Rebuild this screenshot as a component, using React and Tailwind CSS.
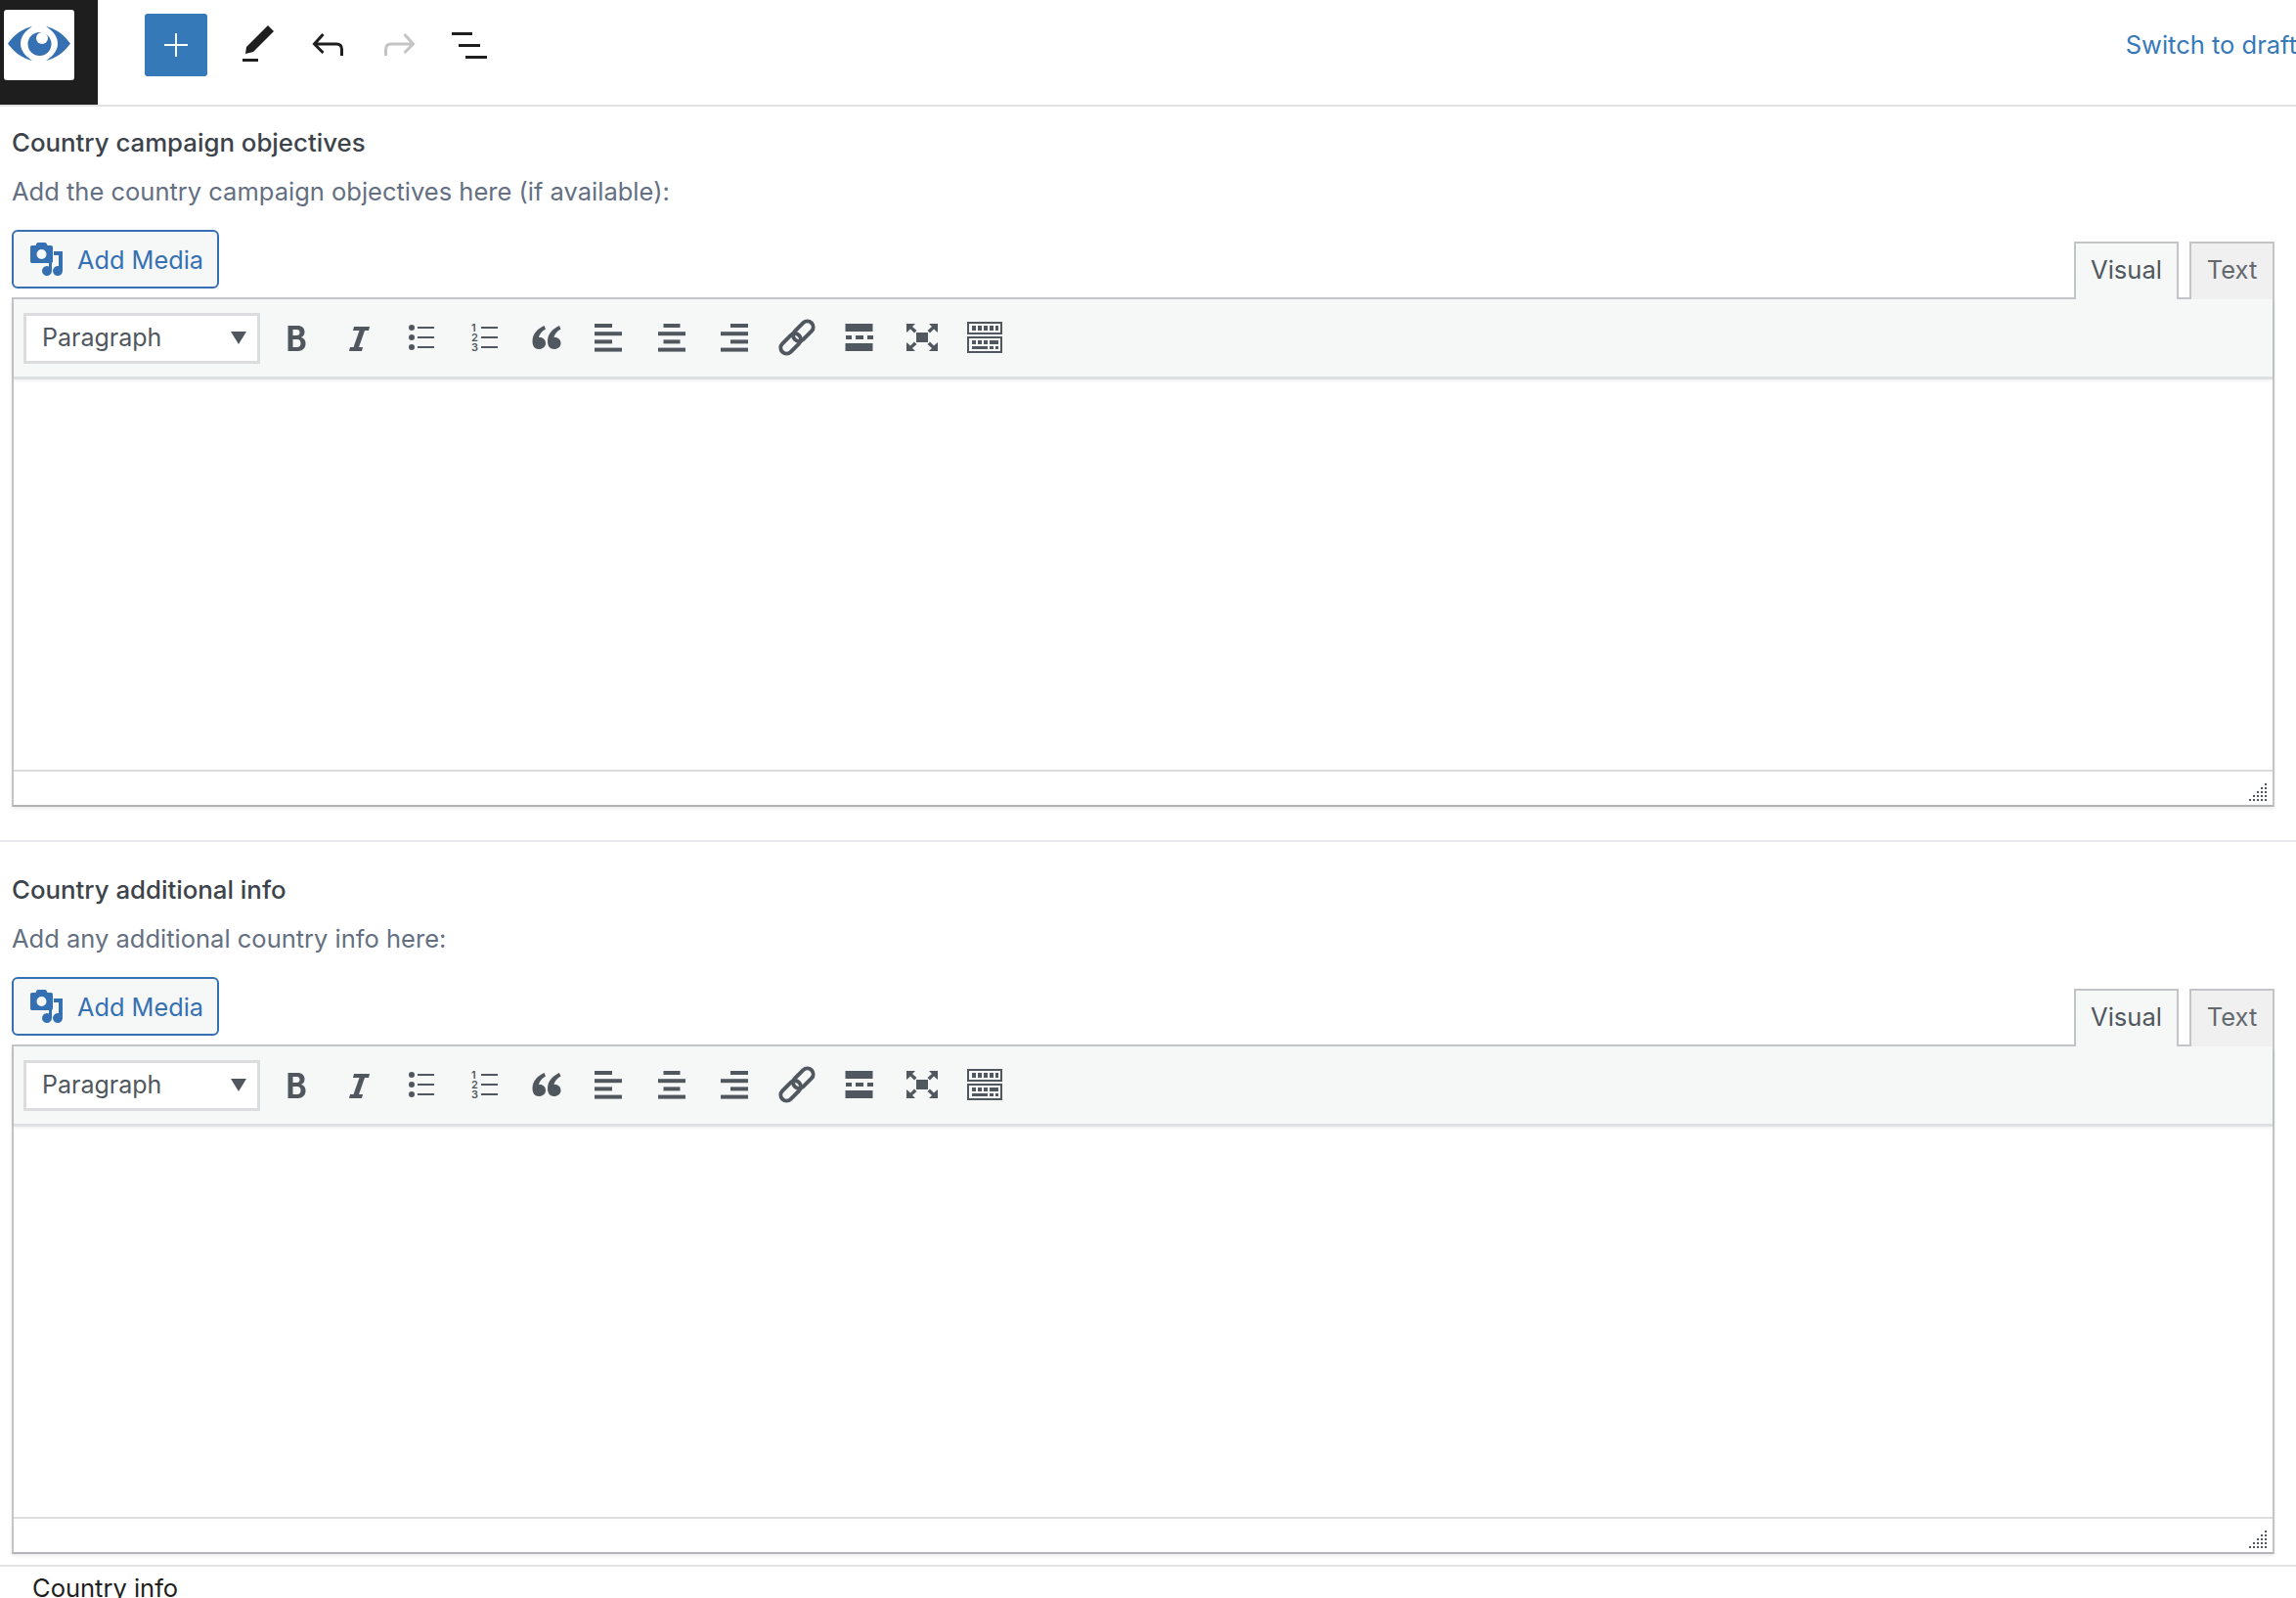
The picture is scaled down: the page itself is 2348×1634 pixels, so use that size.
import React from 'react';

const Fill = ({ className = 'w-9 h-9', children, viewBox = '0 0 36 36', fill = '#50575e' }) => (
    <svg className={className} viewBox={viewBox} fill={fill}>{children}</svg>
);

function BoldIcon() {
    return <Fill><path fillRule="evenodd" d="M9.500 6h9.500c5 0 7.500 2.500 7.500 6.500 0 2.700-1.300 4.600-3.500 5.400 3 .7 4.500 3 4.500 6.400 0 4.700-3 7.700-8 7.700H9.500zM14.500 10v6h4c2 0 3-1 3-3s-1-3-3-3zM14.500 20v8h4.500c2.200 0 3.500-1.400 3.500-4s-1.300-4-3.500-4z" /></Fill>;
}

function ItalicIcon() {
    return <Fill><path d="M13 7h16l-1 4h-4l-6 17h4l-1 4H8l1-4h3.500l6-17H12z" /></Fill>;
}

function BulletIcon() {
    return <Fill>
        <circle cx="8" cy="8" r="3" /><circle cx="8" cy="18" r="3" /><circle cx="8" cy="28" r="3" />
        <rect x="14" y="7" width="17" height="2" /><rect x="14" y="17" width="17" height="2" /><rect x="14" y="27" width="17" height="2" />
    </Fill>;
}

function NumberIcon() {
    return <div className="relative w-9 h-9">
        <Fill className="w-9 h-9 absolute inset-0">
            <rect x="15" y="7" width="17" height="2" /><rect x="15" y="17" width="17" height="2" /><rect x="15" y="27" width="17" height="2" />
        </Fill>
        <span className="absolute left-[5px] top-[3px] text-[11px] leading-[10px] font-semibold text-[#50575e]">1<br />2<br />3</span>
    </div>;
}

function QuoteIcon() {
    const glyph = 'M15.500 6C9 9 3.500 14 3.500 22c0 5 2.500 8 6.500 8 4 0 7-2.500 7-6 0-3.500-2.500-6-6-6-.5 0-.8 0-1 .1.500-3.100 3-6.600 7-8.600z';
    return <Fill>
        <path d={glyph} />
        <path d={glyph} transform="translate(15.500 0)" />
    </Fill>;
}

function AlignIcon({ side }) {
    const rows = {
        left: [[3, 18], [3, 28], [3, 18], [3, 28]],
        center: [[9.500, 17], [4, 28], [9.500, 17], [4, 28]],
        right: [[14, 18], [4, 28], [14, 18], [4, 28]],
    }[side];
    return <Fill>
        {rows.map(([x, w], i) => <rect key={i} x={x} y={4 + i * 8.200} width={w} height="4" />)}
    </Fill>;
}

function LinkIcon() {
    return <svg className="w-9 h-9 overflow-visible" viewBox="0 0 36 36" fill="none" stroke="#50575e" strokeWidth="4">
        <g transform="rotate(-45 18 18)">
            <rect x="-3" y="12" width="24" height="12" rx="6" />
            <rect x="15" y="12" width="24" height="12" rx="6" />
        </g>
    </svg>;
}

function MoreIcon() {
    return <Fill>
        <rect x="3.500" y="4" width="28" height="8" />
        <rect x="4" y="16" width="6" height="4" /><rect x="14" y="16" width="8" height="4" /><rect x="26" y="16" width="6" height="4" />
        <rect x="3.500" y="24" width="28" height="8" />
    </Fill>;
}

function FullscreenIcon() {
    return <Fill>
        <rect x="12" y="13" width="12" height="10" />
        <path d="M2 4h9L8 7l4.500 4-2.500 2.500L6 9.500 2 13zM34 4h-9l3 3-4.500 4 2.500 2.500 4-4 4 3.500zM2 32h9l-3-3 4.500-4-2.500-2.500-4 4L2 23zM34 32h-9l3-3-4.500-4 2.500-2.500 4 4 4-3.500z" />
    </Fill>;
}

function KitchenIcon() {
    return <Fill>
        <path fillRule="evenodd" d="M0 2h36v13H0zM2 4v9h32V4zM0 17h36v17H0zM2 19v13h32V19z" />
        <rect x="5" y="6" width="4" height="5" /><rect x="11" y="6" width="4" height="5" /><rect x="17" y="6" width="4" height="5" /><rect x="23" y="6" width="4" height="5" /><rect x="29" y="6" width="3" height="5" />
        <rect x="5" y="21" width="4" height="4" /><rect x="11" y="21" width="4" height="4" /><rect x="17" y="21" width="4" height="4" /><rect x="23" y="21" width="9" height="4" />
        <rect x="5" y="27" width="16" height="3" /><rect x="23" y="27" width="4" height="3" /><rect x="29" y="27" width="3" height="3" />
    </Fill>;
}

function MediaIcon() {
    return <svg className="w-[34px] h-[35px]" viewBox="0 0 34 35" fill="#3571b2">
        <path fillRule="evenodd" d="M8 0h7c1 0 2 1 2.500 3H21c1.500 0 2 .8 2 2v14c0 1.500-.8 2-2 2H2c-1.200 0-2-.5-2-2V5c0-1.200.5-2 2-2h3.500C6 1 7 0 8 0zM11.500 7a5 5 0 1 0 0 10 5 5 0 0 0 0-10z" />
        <path d="M24 9h9v20a5 5 0 1 1-4-4.900V13h-5z" />
        <path d="M19 21h3v8a5 5 0 1 1-3-4.600z" />
    </svg>;
}

function EditorBlock({ title, hint, first }) {
    return (
        <div className={first ? 'h-[752px] pt-[21px] pl-3 pr-[22px] border-b-2 border-[#e8e8ec]' : 'h-[741px] pt-[33px] pl-3 pr-[22px] border-b-2 border-[#e2e2e4]'}>
            <h2 className="text-[25.8px] leading-[32px] font-medium text-[#3c434a]">{title}</h2>
            <p className="mt-[18px] text-[25.5px] leading-[32px] text-[#646f82]">{hint}</p>
            <div className="mt-[23px] h-[69px] flex justify-between items-start relative">
                <button className="w-[212px] h-[60px] flex items-center gap-[14px] pl-[17px] border-2 border-[#3571b2] rounded-[6px] bg-[#f6f7f7] text-[25.3px] text-[#3571b2]">
                    <MediaIcon />
                    <span className="pt-[2px]">Add Media</span>
                </button>
                <div className="flex gap-[11px] absolute right-0 top-[12px]">
                    <div className="w-[107px] h-[59px] pb-[3px] border-2 border-b-0 border-[#c3c4c7] bg-[#f6f7f7] flex items-center justify-center text-[25.5px] text-[#50575e] z-10">Visual</div>
                    <div className="w-[87px] h-[59px] pb-[3px] border-2 border-b-0 border-[#c3c4c7] bg-[#f0f0f1] flex items-center justify-center text-[25.5px] text-[#646970] z-10">Text</div>
                </div>
            </div>
            <div className="h-[521px] border-2 border-[#c3c4c7] border-b-[#b2b3b7] shadow-[0_2px_3px_rgba(0,0,0,0.08)] flex flex-col">
                <div className="h-[79px] shrink-0 bg-[#f6f7f7] shadow-[0_3px_0_#dfe0e1,0_4px_4px_rgba(0,0,0,0.08)] flex items-center pl-[10px] z-0">
                    <div className="w-[242px] h-[52px] border-[3px] border-[#dcdcde] bg-white flex items-center justify-between pl-[16px] pr-[11px] text-[25px] text-[#50575e]">
                        <span>Paragraph</span>
                        <span className="w-0 h-0 border-x-[8px] border-x-transparent border-t-[13px] border-t-[#50575e]" />
                    </div>
                    <div className="flex ml-[5px] -mt-[1px]">
                        {[<BoldIcon />, <ItalicIcon />, <BulletIcon />, <NumberIcon />, <QuoteIcon />, <AlignIcon side="left" />, <AlignIcon side="center" />, <AlignIcon side="right" />, <LinkIcon />, <MoreIcon />, <FullscreenIcon />, <KitchenIcon />].map((icon, i) => (
                            <div key={i} className="w-[64px] h-[52px] flex items-center justify-center">{icon}</div>
                        ))}
                    </div>
                </div>
                <div className="flex-1 bg-white" />
                <div className="h-[36px] shrink-0 border-t-2 border-[#dcdcde] bg-white flex justify-end items-end pr-[6px] pb-[4px]">
                    <svg className="w-[18px] h-[18px]" viewBox="0 0 18 18" fill="#50575e">
                        {[0, 1, 2, 3, 4].flatMap((r) => [0, 1, 2, 3, 4].filter((c) => c >= 4 - r).map((c) => <rect key={`${r}-${c}`} x={c * 4} y={r * 4} width="2" height="2" />))}
                    </svg>
                </div>
            </div>
        </div>
    );
}

export default function App() {
    return (
        <div className="w-[2348px] h-[1634px] overflow-hidden bg-white font-['Inter',sans-serif]">
            <header className="h-[109px] flex border-b-2 border-[#e0e0e0] box-border">
                <div className="w-[100px] h-[107px] bg-[#1e1e1e] pl-[4px] pt-[10px]">
                    <div className="w-[72px] h-[72px] bg-white rounded-[3px]">
                        <svg className="w-[72px] h-[72px]" viewBox="0 0 72 72">
                            <path fill="#3571b2" d="M4 34.500C10 26 19 19 29 17 21 22 17 28 17 34.500S21 47 29 52C19 50 10 43 4 34.500zM68 34.500C62 26 53 19 43 17c8 5 12 11 12 17.500S51 47 43 52c10-2 19-9 25-17.500z" />
                            <circle cx="36.500" cy="35" r="12" fill="#3571b2" />
                            <circle cx="39" cy="29" r="6" fill="white" />
                        </svg>
                    </div>
                </div>
                <div className="flex items-center flex-1 pl-[48px] mt-[14px] h-[64px]">
                    <button className="w-[64px] h-[64px] bg-[#3679b8] rounded-[3px] flex items-center justify-center">
                        <svg className="w-[24px] h-[24px]" viewBox="0 0 24 24" fill="white"><rect x="11" width="2" height="24" /><rect y="11" width="24" height="2" /></svg>
                    </button>
                    <div className="flex ml-[16px]">
                        <div className="w-[72px] h-[44px] flex items-center justify-center">
                            <svg className="w-[32px] h-[37px] -mt-[3px]" viewBox="0 0 32 37" fill="#1e1e1e"><path d="M3 29l1-7L26 0l6 6-21 21z" /><rect y="34" width="16" height="3" /></svg>
                        </div>
                        <div className="w-[72px] h-[44px] flex items-center justify-center">
                            <svg className="w-[36px] h-[36px]" viewBox="0 0 36 36" fill="none" stroke="#1e1e1e" strokeWidth="3"><path d="M12.500 7l-9 10 9 9M3.500 17H26c3.500 0 5.500 2 5.500 5.500V29" /></svg>
                        </div>
                        <div className="w-[72px] h-[44px] flex items-center justify-center">
                            <svg className="w-[36px] h-[36px]" viewBox="0 0 36 36" fill="none" stroke="#c4c4c4" strokeWidth="3"><path transform="matrix(-1 0 0 1 36 0)" d="M12.500 7l-9 10 9 9M3.500 17H26c3.500 0 5.500 2 5.500 5.500V29" /></svg>
                        </div>
                        <div className="w-[72px] h-[44px] flex items-center justify-center">
                            <svg className="w-[36px] h-[27px]" viewBox="0 0 36 27" fill="#1e1e1e"><rect width="21" height="3" /><rect x="7" y="12" width="22" height="3" /><rect x="14" y="24" width="22" height="3" /></svg>
                        </div>
                    </div>
                    <span className="ml-auto -mr-[1px] text-[25.5px] leading-[34px] text-[#3679b8] whitespace-nowrap">Switch to draft</span>
                </div>
            </header>
            <EditorBlock first title="Country campaign objectives" hint="Add the country campaign objectives here (if available):" />
            <EditorBlock title="Country additional info" hint="Add any additional country info here:" />
            <div className="pl-[33px] pt-[6px] text-[25.5px] leading-[32px] text-[#1e1e1e]">Country info</div>
        </div>
    );
}
